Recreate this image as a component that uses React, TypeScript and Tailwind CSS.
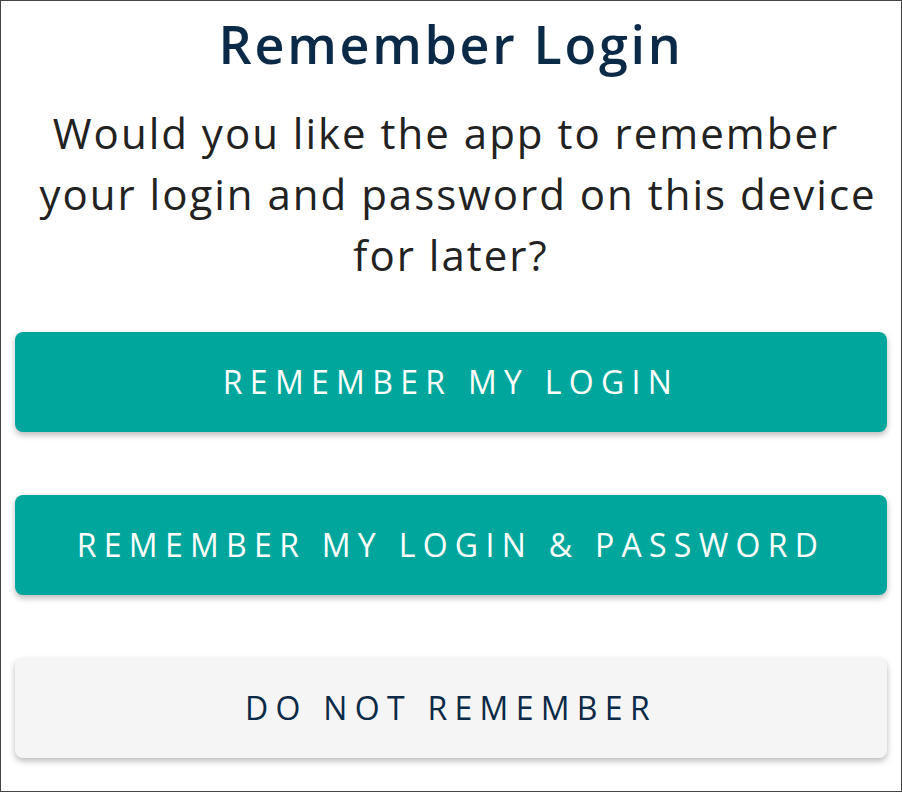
export default function App() {
  const font = { fontFamily: '"Open Sans", "Liberation Sans", sans-serif' };
  const btn =
    "h-[100px] w-full rounded-lg text-[32px] tracking-[7.3px] shadow-[0_3px_6px_rgba(0,0,0,0.28)]";
  return (
    <div
      className="w-[902px] h-[792px] bg-white border border-[#444444] flex flex-col px-[14px]"
      style={font}
    >
      <h1 className="text-center text-[52px] leading-[60px] font-semibold tracking-[2.7px] text-[#0b2a47] mt-[13px]">
        Remember Login
      </h1>
      <p className="text-center text-[42px] leading-[61px] tracking-[2px] text-[#222222] mt-[28px]">
        <span className="block pr-[10px]">Would you like the app to remember</span>
        <span className="block pl-[14px]">your login and password on this device</span>
        <span className="block">for later?</span>
      </p>
      <div className="flex flex-col gap-[63px] mt-[47px]">
        <button className={`${btn} bg-[#00a69c] text-white`}>REMEMBER MY LOGIN</button>
        <button className={`${btn} bg-[#00a69c] text-white`}>
          REMEMBER MY LOGIN &amp; PASSWORD
        </button>
        <button className={`${btn} bg-[#f5f5f5] text-[#0b2a47]`}>DO NOT REMEMBER</button>
      </div>
    </div>
  );
}
